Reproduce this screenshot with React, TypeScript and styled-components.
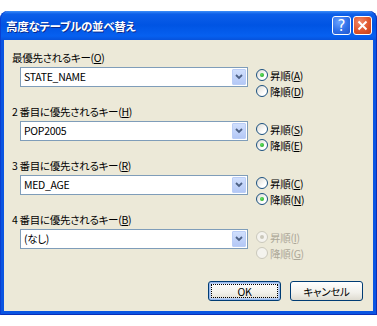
import styled, { createGlobalStyle } from "styled-components";

const GlobalStyle = createGlobalStyle`
  body {
    margin: 0;
    background: #ffffff;
  }
`;

const uiFont = `"Noto Sans CJK JP", "DejaVu Sans", sans-serif`;

const Window = styled.div`
  margin-top: 11px;
  width: 377px;
  box-sizing: border-box;
  border-radius: 8px 8px 0 0;
  background: linear-gradient(
    to bottom,
    #3d8ff8 0px,
    #0d5fe9 3px,
    #0054e3 14px,
    #0660f0 25px,
    #0652dc 29px,
    #0a55e2 29px
  );
  box-shadow: inset 1px 0 #0a3fd0, inset -1px 0 #0a2fb8, inset 0 -1px #0a2fb8;
  padding: 0 4px 4px;
  font-family: ${uiFont};
  font-size: 10.5px;
  letter-spacing: -0.3px;
  font-feature-settings: "palt";
  color: #000000;
`;

const TitleBar = styled.div`
  height: 29px;
  display: flex;
  align-items: center;
  padding: 0 1px 0 2px;
  gap: 2px;
`;

const Title = styled.div`
  flex: 1;
  color: #ffffff;
  font-weight: 700;
  font-size: 11.5px;
  letter-spacing: -0.3px;
  text-shadow: 1px 1px #0b2a8c;
`;

const CaptionButton = styled.div<{ $kind: "help" | "close" }>`
  width: 19px;
  height: 19px;
  box-sizing: border-box;
  border: 1px solid #ffffff;
  border-radius: 3px;
  display: flex;
  align-items: center;
  justify-content: center;
  color: #ffffff;
  font-family: "DejaVu Sans", sans-serif;
  font-size: 15px;
  letter-spacing: 0;
  background: ${(p) =>
    p.$kind === "close"
      ? "radial-gradient(circle at 35% 30%, #f08a6a 0%, #e0562c 55%, #c2401a 100%)"
      : "radial-gradient(circle at 35% 30%, #6aa2ff 0%, #2f6fe8 55%, #1f55cc 100%)"};
`;

const Body = styled.div`
  background: #ece9d8;
  padding: 11px 10px 10px 8px;
  display: flex;
  flex-direction: column;
`;

const Groups = styled.div`
  display: flex;
  flex-direction: column;
  gap: 6px;
`;

const Group = styled.div`
  display: flex;
  flex-direction: column;
  gap: 2px;
`;

const Label = styled.div`
  height: 14px;
  line-height: 14px;
  white-space: nowrap;
`;

const Key = styled.span`
  text-decoration: underline;
  text-underline-offset: 1px;
`;

const Row = styled.div`
  display: flex;
  padding-left: 8px;
  gap: 8px;
`;

const Combo = styled.div`
  width: 228px;
  height: 20px;
  box-sizing: border-box;
  border: 1px solid #7f9db9;
  background: #ffffff;
  display: flex;
  align-items: center;
  padding: 1px;
`;

const ComboText = styled.div`
  flex: 1;
  padding-left: 2px;
  line-height: 16px;
`;

const DropButton = styled.div`
  width: 14px;
  height: 16px;
  box-sizing: border-box;
  border: 1px solid #bacdf6;
  border-radius: 1px;
  background: linear-gradient(to bottom, #d0dffd, #b4c8f6);
  display: flex;
  align-items: center;
  justify-content: center;
`;

const Radios = styled.div`
  display: flex;
  flex-direction: column;
`;

const RadioRow = styled.div<{ $disabled?: boolean }>`
  height: 16px;
  display: flex;
  align-items: center;
  gap: 2px;
  color: ${(p) => (p.$disabled ? "#aca899" : "#000000")};
`;

const RadioCircle = styled.div<{ $disabled?: boolean }>`
  width: 12px;
  height: 12px;
  box-sizing: border-box;
  border-radius: 50%;
  border: 1px solid ${(p) => (p.$disabled ? "#cac8bb" : "#1c5180")};
  background: ${(p) =>
    p.$disabled ? "#f4f3ee" : "linear-gradient(135deg, #dcdbd4, #ffffff 70%)"};
  display: flex;
  align-items: center;
  justify-content: center;
`;

const RadioDot = styled.div<{ $disabled?: boolean }>`
  width: 4px;
  height: 4px;
  border-radius: 50%;
  background: ${(p) =>
    p.$disabled ? "#cac8bb" : "radial-gradient(circle at 40% 40%, #5ee25e, #1b9a1b)"};
`;

const ButtonBar = styled.div`
  margin-top: 20px;
  display: flex;
  justify-content: flex-end;
  gap: 9px;
`;

const PushButton = styled.div<{ $default?: boolean }>`
  width: 73px;
  height: 20px;
  box-sizing: border-box;
  border: 1px solid #003c74;
  border-radius: 3px;
  background: linear-gradient(to bottom, #ffffff, #f1f0ea 60%, #dedbd0);
  display: flex;
  align-items: center;
  justify-content: center;
  box-shadow: ${(p) =>
    p.$default ? "inset 0 0 0 1px #97b8ec, inset 0 0 0 2px #bcd2f4" : "none"};
  position: relative;
  &::after {
    content: "";
    display: ${(p) => (p.$default ? "block" : "none")};
    position: absolute;
    inset: 2px;
    border: 1px dotted #000000;
  }
`;

const Chevron = () => (
  <svg width="8" height="6" viewBox="0 0 8 6">
    <path d="M1 1 L4 4 L7 1" fill="none" stroke="#4d6185" strokeWidth="1.8" />
  </svg>
);

const CloseGlyph = () => (
  <svg width="11" height="11" viewBox="0 0 11 11">
    <path d="M1.5 1.5 L9.5 9.5 M9.5 1.5 L1.5 9.5" stroke="#ffffff" strokeWidth="2" />
  </svg>
);

type Radio = { text: string; key: string; checked?: boolean };

type KeyGroupProps = {
  label: string;
  accessKey: string;
  value: string;
  radios: [Radio, Radio];
  disabled?: boolean;
};

const KeyGroup = ({ label, accessKey, value, radios, disabled }: KeyGroupProps) => (
  <Group>
    <Label>
      {label}(<Key>{accessKey}</Key>)
    </Label>
    <Row>
      <Combo>
        <ComboText>{value}</ComboText>
        <DropButton>
          <Chevron />
        </DropButton>
      </Combo>
      <Radios>
        {radios.map((r) => (
          <RadioRow key={r.key} $disabled={disabled}>
            <RadioCircle $disabled={disabled}>
              {r.checked && <RadioDot $disabled={disabled} />}
            </RadioCircle>
            <span>
              {r.text}(<Key>{r.key}</Key>)
            </span>
          </RadioRow>
        ))}
      </Radios>
    </Row>
  </Group>
);

export default function App() {
  return (
    <>
      <GlobalStyle />
      <Window>
        <TitleBar>
          <Title>高度なテーブルの並べ替え</Title>
          <CaptionButton $kind="help">?</CaptionButton>
          <CaptionButton $kind="close">
            <CloseGlyph />
          </CaptionButton>
        </TitleBar>
        <Body>
          <Groups>
            <KeyGroup
              label="最優先されるキー"
              accessKey="O"
              value="STATE_NAME"
              radios={[
                { text: "昇順", key: "A", checked: true },
                { text: "降順", key: "D" },
              ]}
            />
            <KeyGroup
              label="2 番目に優先されるキー"
              accessKey="H"
              value="POP2005"
              radios={[
                { text: "昇順", key: "S" },
                { text: "降順", key: "E", checked: true },
              ]}
            />
            <KeyGroup
              label="3 番目に優先されるキー"
              accessKey="R"
              value="MED_AGE"
              radios={[
                { text: "昇順", key: "C" },
                { text: "降順", key: "N", checked: true },
              ]}
            />
            <KeyGroup
              label="4 番目に優先されるキー"
              accessKey="B"
              value="(なし)"
              disabled
              radios={[
                { text: "昇順", key: "I", checked: true },
                { text: "降順", key: "G" },
              ]}
            />
          </Groups>
          <ButtonBar>
            <PushButton $default>OK</PushButton>
            <PushButton>キャンセル</PushButton>
          </ButtonBar>
        </Body>
      </Window>
    </>
  );
}
